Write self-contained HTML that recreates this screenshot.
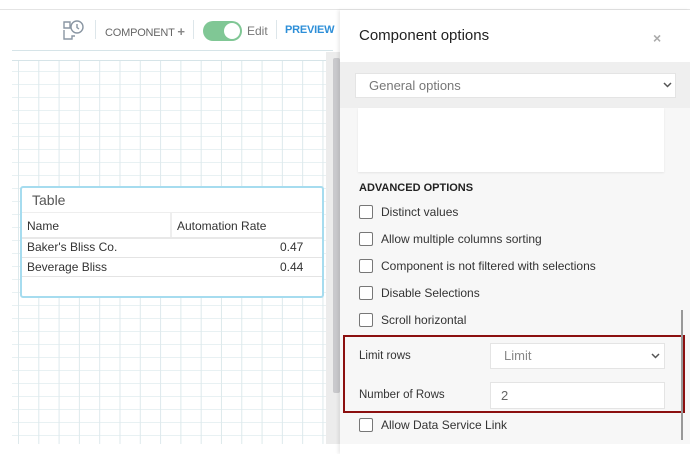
<!DOCTYPE html>
<html><head><style>
*{margin:0;padding:0;box-sizing:border-box}
body{width:690px;height:454px;overflow:hidden;background:#fff;font-family:"Liberation Sans",sans-serif;position:relative;color:#333}
.a{position:absolute}
.grid{left:12px;top:60px;width:314px;height:384px;background-color:#fff;
background-image:linear-gradient(90deg,#dde9ec 1px,transparent 1px),linear-gradient(0deg,#e8f1f3 1px,transparent 1px);
background-size:20.3px 100%,100% 13px;background-position:6px 0,0 11px;border-top:1px solid #d6e4e8}
.cb{width:14px;height:14px;border:1.5px solid #777;border-radius:2px;background:#fff}
.lbl{font-size:12px;color:#333}
</style></head><body>
<div class="a" style="left:0;top:9px;width:690px;height:1px;background:#e4e4e4"></div>
<svg class="a" style="left:62px;top:19px" width="24" height="22" viewBox="0 0 24 22" fill="none" stroke="#8a96a3" stroke-width="1.4"><path d="M2 3h6v6H2z M2 11v9h8v-3h3"/><circle cx="15" cy="8" r="6"/><path d="M15 5v3.5l2 1.5"/></svg>
<div class="a" style="left:95px;top:20px;width:1px;height:19px;background:#dde6ea"></div>
<div class="a" style="left:105px;top:24px;font-size:11px;color:#666;letter-spacing:-0.2px">COMPONENT <b style="font-size:13px;color:#888">+</b></div>
<div class="a" style="left:193px;top:20px;width:1px;height:19px;background:#dde6ea"></div>
<div class="a" style="left:203px;top:21px;width:39px;height:20px;border-radius:10px;background:#80c795"></div>
<div class="a" style="left:224px;top:23px;width:16px;height:16px;border-radius:50%;background:#fff"></div>
<div class="a" style="left:247px;top:24px;font-size:12px;color:#777">Edit</div>
<div class="a" style="left:276px;top:20px;width:1px;height:19px;background:#dde6ea"></div>
<div class="a" style="left:285px;top:24px;font-size:11px;font-weight:bold;color:#2e8fd8;letter-spacing:-0.2px">PREVIEW</div>
<div class="a" style="left:12px;top:50px;width:321px;height:1px;background:#d6e4e8"></div>
<div class="a grid"></div>
<div class="a" style="left:326px;top:52px;width:14px;height:402px;background:#ececec"></div>
<div class="a" style="left:333px;top:58px;width:7px;height:335px;background:#c9c9cc;border-radius:2px"></div>
<div class="a" style="left:0;top:444px;width:340px;height:10px;background:#fff"></div>
<div class="a" style="left:20px;top:186px;width:304px;height:112px;background:#fff;border:2px solid #a6dcef;border-radius:3px">
 <div class="a" style="left:10px;top:4px;font-size:14px;color:#555">Table</div>
 <div class="a" style="left:0;top:24px;width:300px;height:1px;background:#eee"></div>
 <div class="a" style="left:5px;top:31px;font-size:12px">Name</div>
 <div class="a" style="left:148px;top:24px;width:2px;height:26px;background:#eee"></div>
 <div class="a" style="left:155px;top:31px;font-size:12px">Automation Rate</div>
 <div class="a" style="left:0;top:49px;width:300px;height:2px;background:#e8e8e8"></div>
 <div class="a" style="left:5px;top:52px;font-size:12px">Baker's Bliss Co.</div>
 <div class="a" style="left:258px;top:52px;font-size:12px">0.47</div>
 <div class="a" style="left:0;top:69px;width:300px;height:1px;background:#e4e4e4"></div>
 <div class="a" style="left:5px;top:72px;font-size:12px">Beverage Bliss</div>
 <div class="a" style="left:258px;top:72px;font-size:12px">0.44</div>
 <div class="a" style="left:0;top:88px;width:300px;height:1px;background:#e4e4e4"></div>
</div>
<div class="a" style="left:340px;top:10px;width:350px;height:444px;background:#f7f7f7;box-shadow:-2px 0 3px rgba(0,0,0,.08)"></div>
<div class="a" style="left:340px;top:10px;width:350px;height:52px;background:#fff"></div>
<div class="a" style="left:359px;top:27px;font-size:15px;color:#222">Component options</div>
<div class="a" style="left:653px;top:30px;font-size:14px;font-weight:bold;color:#aaa">×</div>
<div class="a" style="left:340px;top:62px;width:350px;height:46px;background:#efefef"></div>
<div class="a" style="left:355px;top:73px;width:321px;height:25px;background:#fff;border:1px solid #e4e4e4"></div>
<div class="a" style="left:369px;top:78px;font-size:13px;color:#777">General options</div>
<svg class="a" style="left:663px;top:82px" width="9" height="6"><path d="M1 1l3.5 3.5L8 1" stroke="#555" stroke-width="1.5" fill="none"/></svg>
<div class="a" style="left:358px;top:108px;width:306px;height:64px;background:#fff;box-shadow:0 1px 2px rgba(0,0,0,.08)"></div>
<div class="a" style="left:359px;top:182px;font-size:11px;font-weight:bold;color:#222">ADVANCED OPTIONS</div>
<div class="a cb" style="left:359px;top:205px"></div><div class="a lbl" style="left:381px;top:205px">Distinct values</div>
<div class="a cb" style="left:359px;top:232px"></div><div class="a lbl" style="left:381px;top:232px">Allow multiple columns sorting</div>
<div class="a cb" style="left:359px;top:259px"></div><div class="a lbl" style="left:381px;top:259px">Component is not filtered with selections</div>
<div class="a cb" style="left:359px;top:286px"></div><div class="a lbl" style="left:381px;top:286px">Disable Selections</div>
<div class="a cb" style="left:359px;top:313px"></div><div class="a lbl" style="left:381px;top:313px">Scroll horizontal</div>
<div class="a" style="left:343px;top:335px;width:342px;height:78px;border:2px solid #8b0f0f"></div>
<div class="a lbl" style="left:359px;top:350px;font-size:11.5px">Limit rows</div>
<div class="a" style="left:490px;top:343px;width:175px;height:26px;background:#fff;border:1px solid #e4e4e4"></div>
<div class="a" style="left:504px;top:348px;font-size:13px;color:#888">Limit</div>
<svg class="a" style="left:651px;top:353px" width="9" height="6"><path d="M1 1l3.5 3.5L8 1" stroke="#555" stroke-width="1.5" fill="none"/></svg>
<div class="a lbl" style="left:359px;top:389px;font-size:11.5px">Number of Rows</div>
<div class="a" style="left:490px;top:382px;width:175px;height:27px;background:#fff;border:1px solid #e4e4e4"></div>
<div class="a" style="left:501px;top:388px;font-size:13px;color:#666">2</div>
<div class="a cb" style="left:359px;top:418px"></div><div class="a lbl" style="left:381px;top:418px">Allow Data Service Link</div>
<div class="a" style="left:681px;top:310px;width:2px;height:130px;background:#999"></div>
<div class="a" style="left:340px;top:444px;width:350px;height:10px;background:#fff"></div>
</body></html>
